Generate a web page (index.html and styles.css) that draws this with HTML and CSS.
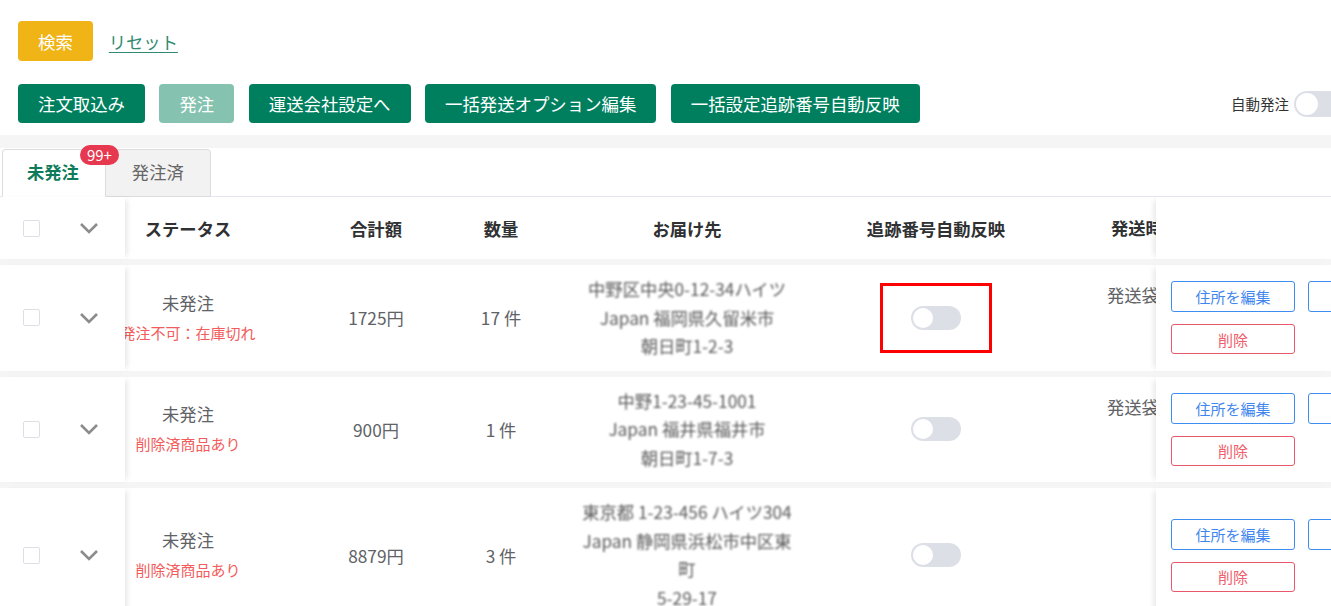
FILE: index.html
```html
<!DOCTYPE html>
<html lang="ja">
<head>
  <meta charset="UTF-8">
  <title>注文一覧</title>
  <link rel="stylesheet" href="styles.css">
</head>
<body>
<div class="toolbar">
  <div class="search-row">
    <button class="btn btn-search">検索</button>
    <a class="reset-link" href="#">リセット</a>
  </div>
  <div class="action-row">
    <div class="actions">
      <button class="btn btn-green">注文取込み</button>
      <button class="btn btn-green btn-disabled">発注</button>
      <button class="btn btn-green">運送会社設定へ</button>
      <button class="btn btn-green">一括発送オプション編集</button>
      <button class="btn btn-green">一括設定追跡番号自動反映</button>
    </div>
    <div class="auto-order">
      <span>自動発注</span>
      <span class="switch switch-lg"><span class="knob"></span></span>
    </div>
  </div>
</div>

<div class="tabs">
  <div class="tab tab-active">
    未発注
    <span class="badge">99+</span>
  </div>
  <div class="tab">発注済</div>
</div>

<div class="table">
  <div class="row head">
    <div class="cell fixed-left">
      <span class="checkbox"></span>
      <svg class="chevron" width="20" height="12" viewBox="0 0 20 12"><path d="M2 2 L10 10 L18 2" /></svg>
    </div>
    <div class="cell status">ステータス</div>
    <div class="cell amount">合計額</div>
    <div class="cell qty">数量</div>
    <div class="cell addr-head">お届け先</div>
    <div class="cell track">追跡番号自動反映</div>
    <div class="cell ship">発送時間</div>
    <div class="cell fixed-right"></div>
  </div>

  <div class="row">
    <div class="cell fixed-left">
      <span class="checkbox"></span>
      <svg class="chevron" width="20" height="12" viewBox="0 0 20 12"><path d="M2 2 L10 10 L18 2" /></svg>
    </div>
    <div class="cell status">
      <div class="status-main">未発注</div>
      <div class="status-note">発注不可：在庫切れ</div>
    </div>
    <div class="cell amount">1725円</div>
    <div class="cell qty">17 件</div>
    <div class="cell addr">
      <div class="addr-text">中野区中央0-12-34ハイツ<br>Japan 福岡県久留米市<br>朝日町1-2-3</div>
    </div>
    <div class="cell track">
      <span class="mark"><span class="switch"><span class="knob"></span></span></span>
    </div>
    <div class="cell ship">発送袋（ネコポス）</div>
    <div class="cell fixed-right">
      <div class="ops">
        <button class="op op-blue">住所を編集</button>
        <button class="op op-blue"></button>
        <button class="op op-red">削除</button>
      </div>
    </div>
  </div>

  <div class="row">
    <div class="cell fixed-left">
      <span class="checkbox"></span>
      <svg class="chevron" width="20" height="12" viewBox="0 0 20 12"><path d="M2 2 L10 10 L18 2" /></svg>
    </div>
    <div class="cell status">
      <div class="status-main">未発注</div>
      <div class="status-note">削除済商品あり</div>
    </div>
    <div class="cell amount">900円</div>
    <div class="cell qty">1 件</div>
    <div class="cell addr">
      <div class="addr-text">中野1-23-45-1001<br>Japan 福井県福井市<br>朝日町1-7-3</div>
    </div>
    <div class="cell track">
      <span class="switch"><span class="knob"></span></span>
    </div>
    <div class="cell ship">発送袋（ネコポス）</div>
    <div class="cell fixed-right">
      <div class="ops">
        <button class="op op-blue">住所を編集</button>
        <button class="op op-blue"></button>
        <button class="op op-red">削除</button>
      </div>
    </div>
  </div>

  <div class="row">
    <div class="cell fixed-left">
      <span class="checkbox"></span>
      <svg class="chevron" width="20" height="12" viewBox="0 0 20 12"><path d="M2 2 L10 10 L18 2" /></svg>
    </div>
    <div class="cell status">
      <div class="status-main">未発注</div>
      <div class="status-note">削除済商品あり</div>
    </div>
    <div class="cell amount">8879円</div>
    <div class="cell qty">3 件</div>
    <div class="cell addr">
      <div class="addr-text">東京都 1-23-456 ハイツ304<br>Japan 静岡県浜松市中区東<br>町<br>5-29-17</div>
    </div>
    <div class="cell track">
      <span class="switch"><span class="knob"></span></span>
    </div>
    <div class="cell ship"></div>
    <div class="cell fixed-right">
      <div class="ops">
        <button class="op op-blue">住所を編集</button>
        <button class="op op-blue"></button>
        <button class="op op-red">削除</button>
      </div>
    </div>
  </div>
</div>
</body>
</html>
```

FILE: styles.css
```css
html, body {
    width: 100%;
    height: 100%;
    margin: 0;
    padding: 0;
    overflow: hidden;

    background: #f5f5f5;
    color: #606266;
    font-family: "Noto Sans CJK JP", "Noto Sans", sans-serif;
}

/* toolbar */

.toolbar {
    padding: 21px 0 12px 18px;
    background: #fff;
}

.search-row {
    height: 40px;

    display: flex;
    align-items: center;
    gap: 16px;
}

.btn {
    height: 39px;
    padding: 0 20px;
    border: none;
    border-radius: 4px;

    color: #fff;
    font-family: inherit;
    font-size: 17.4px;
    line-height: 39px;
}

.btn-search {
    height: 40px;
    background: #f0b417;
}

.reset-link {
    color: #2f8a72;
    font-size: 17.3px;
    text-decoration: underline;
    text-underline-offset: 3px;
}

.action-row {
    margin-top: 23px;

    display: flex;
    align-items: center;
    justify-content: space-between;
}

.actions {
    display: flex;
    gap: 14.5px;
}

.btn-green {
    background: #007f5f;
}

.btn-disabled {
    background: #85c3b0;
}

.auto-order {
    margin-right: -13px;

    display: flex;
    align-items: center;
    gap: 5px;

    color: #333;
    font-size: 14.5px;
}

/* switch */

.switch {
    width: 50px;
    height: 24px;
    padding: 0 2px;
    box-sizing: border-box;
    border-radius: 12px;
    background: #dcdfe6;

    display: flex;
    align-items: center;
}

.switch-lg {
    height: 26px;
    border-radius: 13px;
}

.knob {
    width: 20px;
    height: 20px;
    border-radius: 50%;
    background: #fff;
}

.switch-lg .knob {
    width: 22px;
    height: 22px;
}

/* tabs */

.tabs {
    height: 49px;
    margin-top: 13px;
    padding: 1px 0 0 2px;
    box-sizing: border-box;
    border-bottom: 1px solid #e6e6ef;
    background: #fff;

    display: flex;
    align-items: flex-end;
}

.tab {
    position: relative;
    height: 48px;
    margin-bottom: -1px;
    padding: 0 26px 4px;
    box-sizing: border-box;
    border: 1px solid #dcdcdc;
    border-radius: 4px 4px 0 0;
    background: #f2f2f2;

    display: flex;
    align-items: center;

    color: #666;
    font-size: 17.3px;
}

.tab-active {
    padding-left: 24px;
    border-bottom-color: #fff;
    background: #fff;
    color: #0d7b59;
    font-weight: bold;
    z-index: 1;
}

.tab + .tab {
    margin-left: -1px;
}

.badge {
    position: absolute;
    top: -5px;
    right: -14px;
    height: 20px;
    padding: 0 7px;
    border-radius: 10px;
    background: #e6394f;

    color: #fff;
    font-size: 15px;
    font-weight: normal;
    line-height: 20px;
}

/* table */

.row {
    display: grid;
    grid-template-columns: 125px 126px 200px 100px 272px 226px 107px 1fr;
    background: #fff;
    font-size: 17.3px;
}

.row + .row {
    margin-top: 6px;
}

.head {
    height: 62px;
    color: #303133;
    font-weight: bold;
}

.cell {
    display: flex;
    align-items: center;
    justify-content: center;
    white-space: nowrap;
}

.fixed-left {
    position: relative;
    z-index: 2;
    padding-left: 23px;
    background: #fff;
    box-shadow: 5px 0 6px -3px rgba(0, 0, 0, 0.1);

    justify-content: flex-start;
    gap: 39px;
}

.checkbox {
    width: 17px;
    height: 17px;
    box-sizing: border-box;
    border: 1px solid #dcdfe6;
    border-radius: 2px;
    background: #fff;
}

.chevron path {
    fill: none;
    stroke: #8c8c8c;
    stroke-width: 2.6;
}

.status {
    flex-direction: column;
}

.status-main {
    line-height: 30px;
}

.status-note {
    color: #f25c5c;
    font-size: 15px;
    line-height: 30px;
}

.amount {
    padding-left: 50px;
}

.addr,
.addr-head {
    padding: 10px 0;
}

.addr-text {
    color: #5a5a5a;
    line-height: 28.5px;
    text-align: center;
    filter: blur(1.3px);
}

.mark {
    padding: 20px 28px;
    border: 3px solid #f00;
}

.ship {
    padding: 17px 0 0 58px;
    overflow: hidden;

    align-items: flex-start;
    justify-content: flex-start;
    line-height: 26px;
}

.head .ship {
    padding: 0 0 0 62px;
    align-items: center;
}

.fixed-right {
    position: relative;
    z-index: 2;
    padding-left: 15px;
    overflow: hidden;
    background: #fff;
    box-shadow: -5px 0 6px -3px rgba(0, 0, 0, 0.1);

    justify-content: flex-start;
}

.ops {
    display: grid;
    grid-template-columns: 124px 124px;
    gap: 12px 13px;
}

.op {
    height: 31px;
    border-radius: 3px;
    background: #fff;

    font-family: inherit;
    font-size: 15px;
}

.op-blue {
    border: 1px solid #3d8ef0;
    color: #3f86ee;
}

.op-red {
    height: 30px;
    border: 1px solid #e8576a;
    color: #f0606a;
}
```
